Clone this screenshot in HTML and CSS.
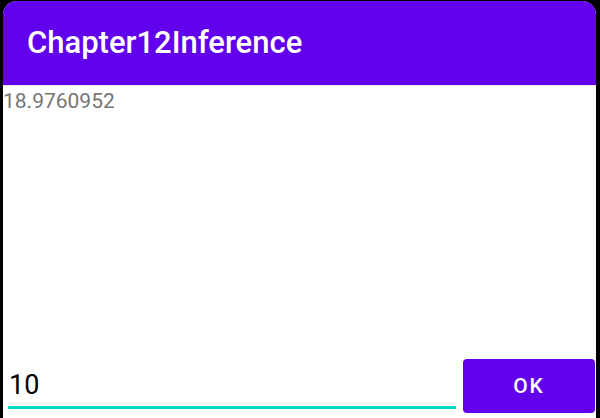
FILE: index.html
```html
<!DOCTYPE html>
<html>
<head>
<meta charset="utf-8">
<link rel="stylesheet" href="styles.css">
</head>
<body>
<div class="app">
  <header class="appbar"><h1 class="title">Chapter12Inference</h1></header>
  <main class="content">
    <div class="result">18.9760952</div>
    <div class="bottom">
      <div class="field"><span class="value">10</span></div>
      <button class="ok">OK</button>
    </div>
  </main>
</div>
</body>
</html>
```

FILE: styles.css
```css
html, body {
  margin: 0;
  padding: 0;
  background: #000;
  width: 600px;
  height: 418px;
  overflow: hidden;
}
.app {
  margin: 1px 4px 0 3px;
  height: 417px;
  background: #fff;
  border-radius: 14px 14px 0 0;
  overflow: hidden;
  display: flex;
  flex-direction: column;
  font-family: Roboto, "Noto Sans", sans-serif;
}
.appbar {
  height: 84px;
  background: #6200ee;
  display: flex;
  align-items: center;
  padding-left: 24px;
  flex-shrink: 0;
}
.title {
  margin: 0;
  color: #fff;
  font-size: 31px;
  font-weight: 500;
  padding-bottom: 2px;
}
.content {
  flex: 1;
  display: flex;
  flex-direction: column;
  justify-content: space-between;
  border-top: 1px dotted #dcdcdc;
}
.result {
  color: #757575;
  font-size: 21px;
  line-height: 24px;
  padding-top: 3px;
}
.bottom {
  display: flex;
  align-items: flex-end;
  padding: 0 1px 5px 5px;
  gap: 7px;
}
.field {
  flex: 1;
  border-bottom: 3px solid #03dac5;
  height: 44px;
  display: flex;
  align-items: flex-end;
  padding-left: 1px;
  margin-bottom: 4px;
}
.value {
  font-size: 27px;
  color: #000;
  line-height: 30px;
  padding-bottom: 6px;
}
.ok {
  width: 132px;
  height: 54px;
  background: #6200ee;
  color: #fff;
  border: none;
  border-radius: 4px;
  font-family: Roboto, "Noto Sans", sans-serif;
  font-size: 21px;
  font-weight: 500;
  letter-spacing: 2px;
  padding: 0;
}
```
